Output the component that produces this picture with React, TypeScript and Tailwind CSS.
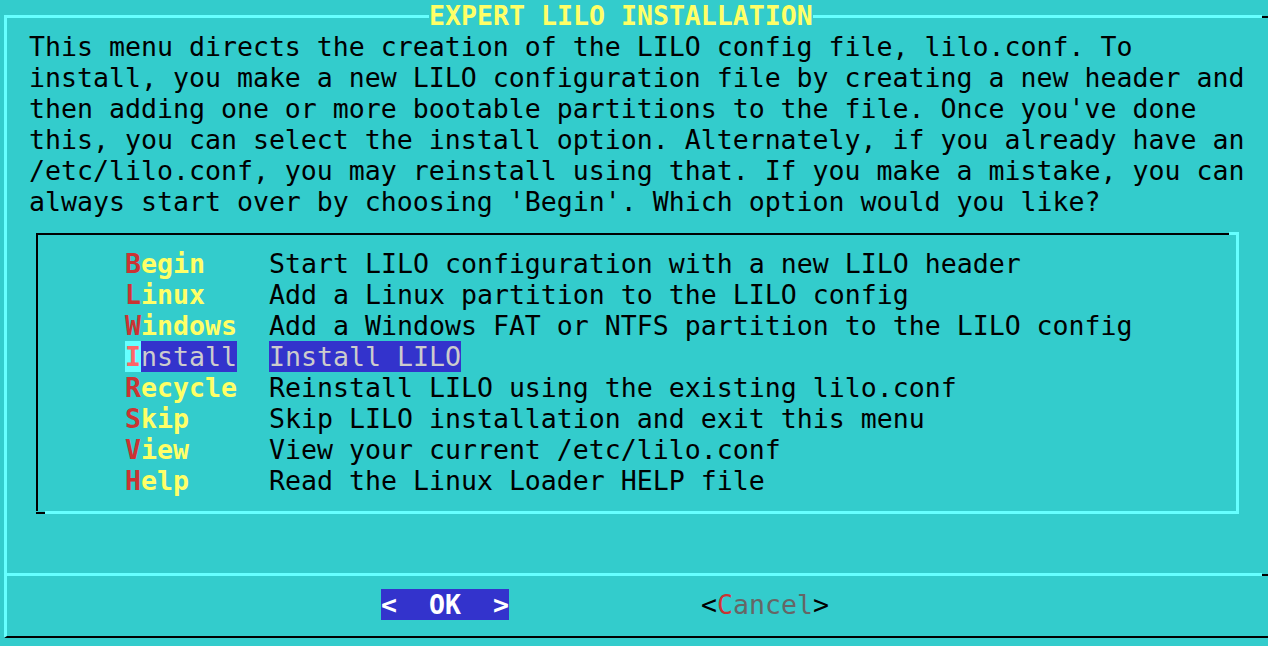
const intro = [
  "This menu directs the creation of the LILO config file, lilo.conf. To",
  "install, you make a new LILO configuration file by creating a new header and",
  "then adding one or more bootable partitions to the file. Once you've done",
  "this, you can select the install option. Alternately, if you already have an",
  "/etc/lilo.conf, you may reinstall using that. If you make a mistake, you can",
  "always start over by choosing 'Begin'. Which option would you like?",
];

const items = [
  { tag: "Begin", desc: "Start LILO configuration with a new LILO header" },
  { tag: "Linux", desc: "Add a Linux partition to the LILO config" },
  { tag: "Windows", desc: "Add a Windows FAT or NTFS partition to the LILO config" },
  { tag: "Install", desc: "Install LILO" },
  { tag: "Recycle", desc: "Reinstall LILO using the existing lilo.conf" },
  { tag: "Skip", desc: "Skip LILO installation and exit this menu" },
  { tag: "View", desc: "View your current /etc/lilo.conf" },
  { tag: "Help", desc: "Read the Linux Loader HELP file" },
];

const selected = "Install";

function MenuRow({ tag, desc }: { tag: string; desc: string }) {
  const active = tag === selected;
  return (
    <div className="flex h-[31px] pl-[87px]">
      <span className="w-[144px] shrink-0 font-bold">
        {active ? (
          <>
            <span className="bg-[#66ffff] text-[#ff6666]">{tag[0]}</span>
            <span className="bg-[#3333cc] font-normal text-[#cccccc]">{tag.slice(1)}</span>
          </>
        ) : (
          <>
            <span className="text-[#cc3333]">{tag[0]}</span>
            <span className="text-[#ffff66]">{tag.slice(1)}</span>
          </>
        )}
      </span>
      <span className={active ? "bg-[#3333cc] text-[#cccccc]" : "text-black"}>{desc}</span>
    </div>
  );
}

export default function App() {
  return (
    <div className="h-[646px] w-[1268px] overflow-hidden whitespace-pre bg-[#33cccc] font-['DejaVu_Sans_Mono',monospace] text-[26.57px] leading-[31px] text-black">
      {/* top border with title */}
      <div className="flex h-[31px]">
        <div className="ml-[4px] mt-[15px] h-[16px] w-[425px] shrink-0 border-l-[3px] border-t-[3px] border-[#66ffff]" />
        <div className="w-[384px] shrink-0 font-bold text-[#ffff66]">EXPERT LILO INSTALLATION</div>
        <div className="mt-[15px] h-[3px] w-[449px] shrink-0 bg-[#66ffff]" />
        <div className="mt-[16px] h-[2px] flex-1 bg-black" />
      </div>

      <div className="ml-[4px] border-b-[2px] border-l-[3px] border-b-black border-l-[#66ffff] pb-[16px]">
        <div className="pl-[22px]">
          {intro.map((line) => (
            <div key={line} className="h-[31px]">
              {line}
            </div>
          ))}
        </div>

        {/* menu box */}
        <div className="ml-[29px] mt-[15px] w-[1203px]">
          <div className="flex h-[3px] items-end">
            <div className="h-[2px] w-[1193px] bg-black" />
            <div className="h-[3px] flex-1 bg-[#66ffff]" />
          </div>
          <div className="border-l-[2px] border-r-[3px] border-l-black border-r-[#66ffff] pb-[15px] pt-[13px]">
            {items.map((it) => (
              <MenuRow key={it.tag} tag={it.tag} desc={it.desc} />
            ))}
          </div>
          <div className="flex h-[3px] items-end">
            <div className="h-[2px] w-[9px] bg-black" />
            <div className="h-[3px] flex-1 bg-[#66ffff]" />
          </div>
        </div>

        {/* separator */}
        <div className="mt-[59px] flex h-[3px] items-end">
          <div className="h-[3px] w-[1255px] bg-[#66ffff]" />
          <div className="h-[2px] flex-1 bg-black" />
        </div>

        {/* buttons */}
        <div className="mt-[13px] flex h-[31px] pl-[374px]">
          <span className="bg-[#3333cc] font-bold text-white">{"<  OK  >"}</span>
          <span className="ml-[192px]">
            {"<"}
            <span className="text-[#cc3333]">C</span>
            <span className="text-[#666666]">ancel</span>
            {">"}
          </span>
        </div>
      </div>
    </div>
  );
}
